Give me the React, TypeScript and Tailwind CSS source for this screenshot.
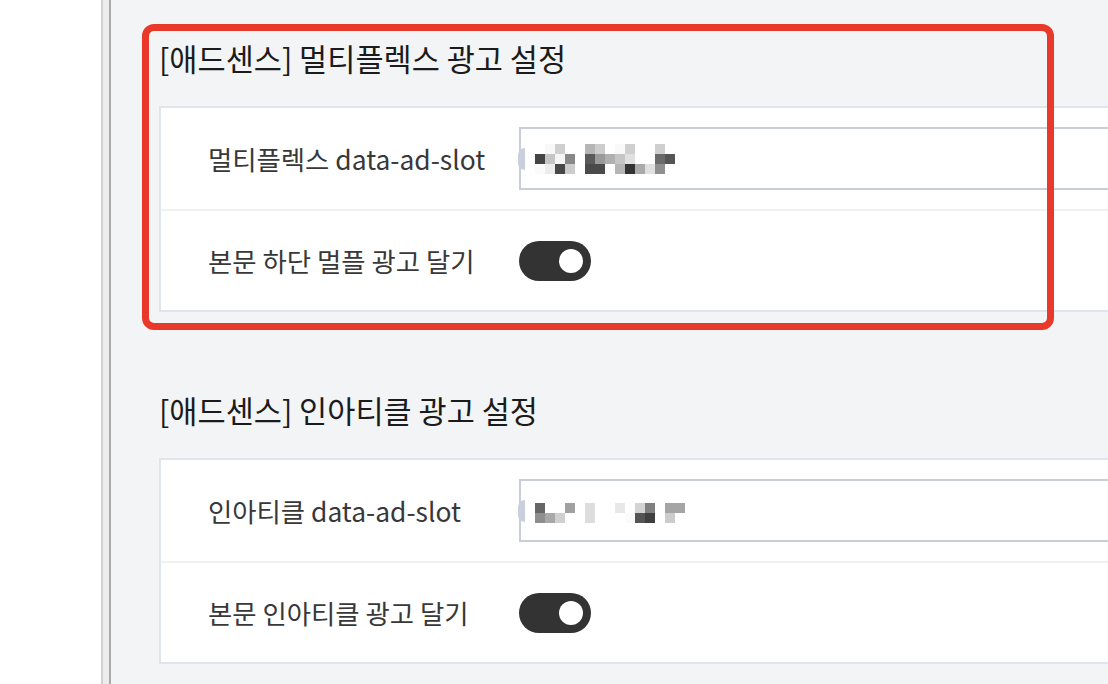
import React from "react";

const input1: string[][] = [
  ["", "bg-[#f8f8f8]", "bg-[#cfcfcf]", "", "", "bg-[#b5b5b5]", "bg-[#cdcdcd]", "", "bg-[#f9f9f9]", "bg-[#cfcfcf]", "", "", "bg-[#cfcfcf]", "", ""],
  ["bg-[#444444]", "bg-[#c5c5c5]", "bg-[#f5f5f5]", "bg-[#888888]", "", "bg-[#5a5a5a]", "bg-[#9a9a9a]", "bg-[#b0b0b0]", "bg-[#c5c5c5]", "bg-[#e0e0e0]", "", "", "bg-[#6a6a6a]", "bg-[#555555]", ""],
  ["bg-[#fafafa]", "bg-[#ececec]", "bg-[#484848]", "bg-[#cccccc]", "", "bg-[#4a4a4a]", "bg-[#4a4a4a]", "", "bg-[#b5b5b5]", "bg-[#333333]", "bg-[#aaaaaa]", "bg-[#e0e0e0]", "bg-[#909090]", "", ""],
];

const input2: string[][] = [
  ["bg-[#666666]", "", "", "bg-[#a0a0a0]", "", "bg-[#dddddd]", "", "", "bg-[#e8e8e8]", "", "bg-[#d4d4d4]", "bg-[#808080]", "", "bg-[#a5a5a5]", "bg-[#a5a5a5]"],
  ["bg-[#8e8e8e]", "bg-[#a8a8a8]", "bg-[#d0d0d0]", "", "", "bg-[#dddddd]", "", "", "", "bg-[#fbfbfb]", "bg-[#555555]", "bg-[#404040]", "", "bg-[#cccccc]", ""],
];

function Pixels({ rows, extra }: { rows: string[][]; extra?: string }) {
  return (
    <div className={"flex flex-col " + (extra ?? "")}>
      {rows.map((r, i) => (
        <div key={i} className="flex">
          {r.map((c, j) => (
            <div key={j} className={"h-[10px] w-[10px] " + c} />
          ))}
        </div>
      ))}
    </div>
  );
}

function SlotInput({ rows, extra }: { rows: string[][]; extra?: string }) {
  return (
    <div className="relative flex h-[63px] w-[700px] shrink-0 items-center border-2 border-[#c9cdd8] bg-white pl-[14px]">
      <div className="absolute left-[-3px] top-1/2 h-[22px] w-[7px] -translate-y-1/2 rounded-l-full bg-[#c9d0dc]" />
      <Pixels rows={rows} extra={extra} />
    </div>
  );
}

function Toggle() {
  return (
    <div className="flex h-[40px] w-[72px] items-center justify-end rounded-full bg-[#333333] pr-[8px]">
      <div className="h-[24px] w-[24px] rounded-full bg-white" />
    </div>
  );
}

function Row({ label, children, top }: { label: string; children: React.ReactNode; top?: boolean }) {
  return (
    <div className={"flex h-[101px] items-center pl-[47px] " + (top ? "border-t-2 border-[#eff0f4]" : "")}>
      <div className="w-[311px] shrink-0 whitespace-nowrap text-[26.4px] leading-[34px] text-[#383838]">{label}</div>
      {children}
    </div>
  );
}

function Section({ title, children, first }: { title: string; children: React.ReactNode; first?: boolean }) {
  return (
    <section className={first ? "" : "mt-[80px]"}>
      <h2 className="mb-[30px] h-[36px] whitespace-nowrap text-[30.6px] leading-[36px] text-[#1b1b1b]">{title}</h2>
      <div className="w-[1100px] border-2 border-[#e0e4ec] bg-white">{children}</div>
    </section>
  );
}

export default function App() {
  return (
    <div
      className="relative flex h-[684px] w-[1108px] overflow-hidden bg-white"
      style={{ fontFamily: '"Noto Sans CJK KR", "Noto Sans", sans-serif' }}
    >
      <div className="w-[101px] shrink-0 bg-white" />
      <div className="w-[2px] shrink-0 bg-[#d2d2d2]" />
      <div className="w-[6px] shrink-0 bg-[#ececec]" />
      <div className="w-[2px] shrink-0 bg-[#a9a9a9]" />
      <main className="min-w-0 flex-1 overflow-hidden bg-[#f3f4f6] pl-[48px] pt-[40px]">
        <Section title="[애드센스] 멀티플렉스 광고 설정" first>
          <Row label="멀티플렉스 data-ad-slot">
            <SlotInput rows={input1} />
          </Row>
          <Row label="본문 하단 멀플 광고 달기" top>
            <Toggle />
          </Row>
        </Section>
        <Section title="[애드센스] 인아티클 광고 설정">
          <Row label="인아티클 data-ad-slot">
            <SlotInput rows={input2} extra="mt-[4px]" />
          </Row>
          <Row label="본문 인아티클 광고 달기" top>
            <Toggle />
          </Row>
        </Section>
      </main>
      <div className="pointer-events-none absolute left-[142px] top-[24px] h-[306px] w-[912px] rounded-[12px] border-[7px] border-[#e8392b]" />
    </div>
  );
}
